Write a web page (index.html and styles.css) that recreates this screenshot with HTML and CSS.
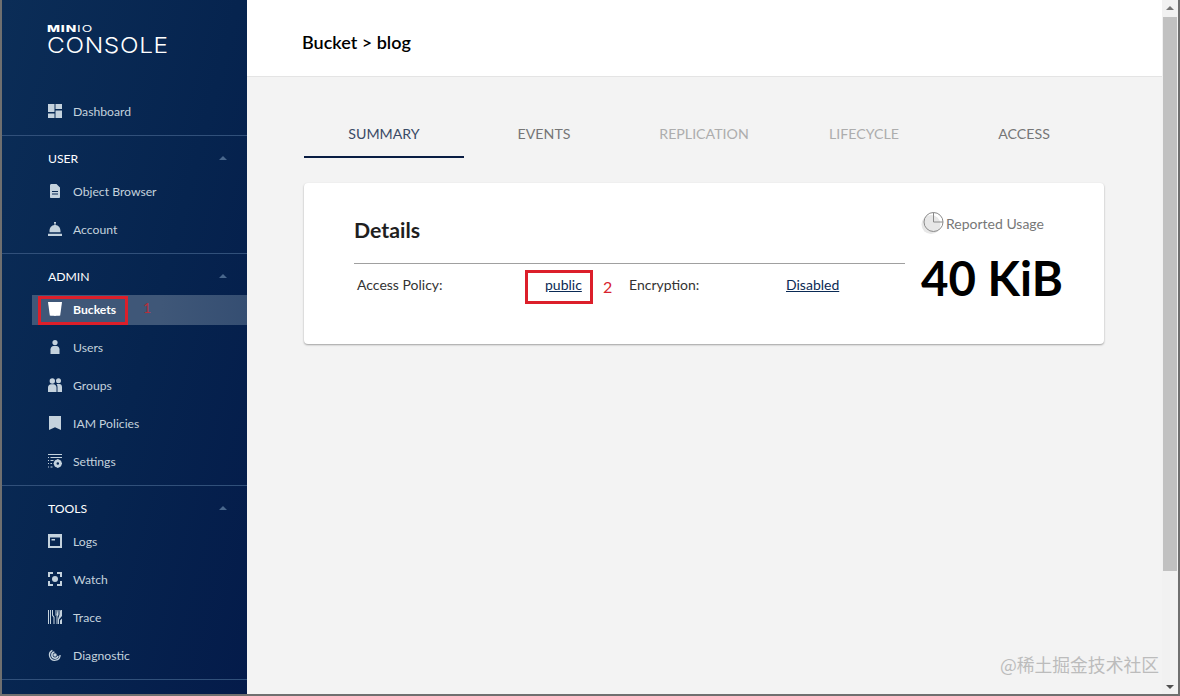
FILE: index.html
```html
<!DOCTYPE html>
<html lang="en">
<head>
<meta charset="utf-8">
<title>MinIO Console</title>
<link rel="stylesheet" href="styles.css">
</head>
<body>
<div class="window">
  <aside class="sidebar">
    <div class="logo">
      <div class="logo-top"><b>MIN</b>IO</div>
      <div class="logo-main">CONSOLE</div>
    </div>
    <section class="group group-first">
      <a class="item">
        <svg class="ico" viewBox="0 0 14 14"><path d="M0 0h6.500v8H0zM7.500 0H14v5H7.500zM0 9.500h6.500V14H0zM7.500 6.500H14V14H7.500z"/></svg>
        <span>Dashboard</span>
      </a>
    </section>
    <section class="group">
      <div class="group-head"><span>USER</span><i class="caret"></i></div>
      <a class="item">
        <svg class="ico" viewBox="0 0 14 14"><path fill-rule="evenodd" d="M2 1.500C2 .7 2.600 0 3.400 0H8.500L12 3.500V13c0 .6-.5 1-1 1H3c-.6 0-1-.4-1-1zM4 7v1h6V7zM4 9.500v1h6v-1z"/></svg>
        <span>Object Browser</span>
      </a>
      <a class="item">
        <svg class="ico" viewBox="0 0 14 14"><path d="M6 0h2v1.500H7.500V3c2.900.2 5 2.700 5 6.200v1H1.500v-1C1.500 5.700 3.600 3.200 6.500 3V1.500H6zM0 11.800h14V14H0z"/></svg>
        <span>Account</span>
      </a>
    </section>
    <section class="group">
      <div class="group-head"><span>ADMIN</span><i class="caret"></i></div>
      <a class="item item-active">
        <svg class="ico" viewBox="0 0 14 14"><path d="M0 0h14l-1.800 13.500c-2.500.5-7.900.5-10.400 0z"/></svg>
        <span>Buckets</span>
      </a>
      <a class="item">
        <svg class="ico" viewBox="0 0 14 14"><circle cx="7" cy="2.600" r="2.600"/><path d="M2.500 14V9.300c0-2 1.500-3.300 3-3.300h3c1.500 0 3 1.300 3 3.300V14z"/></svg>
        <span>Users</span>
      </a>
      <a class="item">
        <svg class="ico" viewBox="0 0 14 14"><circle cx="4.300" cy="3" r="2.700"/><circle cx="10.500" cy="2.800" r="2.500"/><path d="M0 14V9.500c0-2 1.400-3.300 3-3.300h2.500c1.600 0 3 1.300 3 3.300V14zM9.500 14V9c0-1.200-.4-2.200-1-3h3c1.400 0 2.500 1.300 2.500 3v5z"/></svg>
        <span>Groups</span>
      </a>
      <a class="item">
        <svg class="ico" viewBox="0 0 14 14"><path d="M1 0h12v14l-6-2.800L1 14z"/></svg>
        <span>IAM Policies</span>
      </a>
      <a class="item">
        <svg class="ico" viewBox="0 0 14 14"><path d="M0 0h14v1H0zM0 3h1v1H0zM2.500 3h11.500v1H2.500zM0 6h1v1H0zM2.500 6h3v1h-3zM0 9h1v1H0zM2.500 9h1.500v1H2.500zM0 12.500h1v1H0zM2.500 12.500h2v1h-2z"/><circle cx="9.800" cy="9.500" r="2.600" fill="none" stroke-width="2.600" stroke="currentColor"/><path d="M9 5.200h1.600v1.600H9zM9 12.200h1.600v1.600H9zM5.600 8.700h1.600v1.600H5.600zM12.400 8.700H14v1.600h-1.600z"/></svg>
        <span>Settings</span>
      </a>
    </section>
    <section class="group">
      <div class="group-head"><span>TOOLS</span><i class="caret"></i></div>
      <a class="item">
        <svg class="ico" viewBox="0 0 14 14"><path fill-rule="evenodd" d="M0 0h14v14H0zM2 3.500V12h10V3.500zM3.500 5h3.500v1.500H3.500z"/></svg>
        <span>Logs</span>
      </a>
      <a class="item">
        <svg class="ico" viewBox="0 0 14 14"><circle cx="7" cy="7" r="3"/><path d="M0 0h5v2H2v3H0zM9 0h5v5h-2V2H9zM0 9h2v3h3v2H0zM12 9h2v5H9v-2h3z"/></svg>
        <span>Watch</span>
      </a>
      <a class="item">
        <svg class="ico" viewBox="0 0 14 14"><path d="M0 0h1v14H0zM2 0h1v14H2zM4 0l1 .1v5l1.500 2V14h-1V7.500L4 5.500zM7.500 0h1v5l-1 1zM9.500 0h1v5l-1 1.500V14h-1V6zM11.500 0h1v3.500l-1 1zM13 0h1v6l-3 3.500V14h-1V9zM12 10.500l2-2V14h-2z"/></svg>
        <span>Trace</span>
      </a>
      <a class="item">
        <svg class="ico" viewBox="-1 -1 16 16"><path fill="none" stroke="currentColor" stroke-width="1.500" d="M4 1.700A6 6 0 1 0 12.800 7"/><path fill="none" stroke="currentColor" stroke-width="1.800" d="M6.300 3.600A3.600 3.600 0 1 0 10.500 8"/><circle cx="7" cy="7" r="2"/></svg>
        <span>Diagnostic</span>
      </a>
    </section>
  </aside>

  <div class="main">
    <header class="topbar"><h1>Bucket &gt; blog</h1></header>
    <div class="content">
      <nav class="tabs">
        <a class="tab tab-active">SUMMARY</a>
        <a class="tab">EVENTS</a>
        <a class="tab tab-off">REPLICATION</a>
        <a class="tab tab-off">LIFECYCLE</a>
        <a class="tab">ACCESS</a>
      </nav>
      <div class="card">
        <div class="details">
          <h2>Details</h2>
          <div class="rows">
            <span class="lbl lbl-policy">Access Policy:</span>
            <a class="val val-policy">public</a>
            <span class="lbl lbl-enc">Encryption:</span>
            <a class="val">Disabled</a>
          </div>
        </div>
        <div class="usage">
          <div class="usage-label">
            <svg class="pie" viewBox="0 0 24 24"><circle class="pie-shade" cx="10" cy="13.500" r="9.500"/><circle class="pie-line" cx="12.500" cy="11" r="9.500"/><path class="pie-line" d="M12.500 1.500V11H22"/></svg>
            <span>Reported Usage</span>
          </div>
          <div class="usage-value">40 KiB</div>
        </div>
      </div>
    </div>
    <div class="watermark">@稀土掘金技术社区</div>
  </div>

  <div class="scrollbar">
    <i class="arrow arrow-up"></i>
    <div class="thumb-track"><div class="thumb"></div></div>
    <i class="arrow arrow-down"></i>
  </div>

  <div class="mark mark-buckets"></div>
  <div class="mark mark-public"></div>
  <div class="num num-1">1</div>
  <div class="num num-2">2</div>
</div>
</body>
</html>
```

FILE: styles.css
```css
* { box-sizing: border-box; }
html, body { margin: 0; padding: 0; height: 100%; overflow: hidden; }
body { font-family: Lato, "Noto Sans CJK SC", sans-serif; }

.window {
  position: relative;
  display: flex;
  width: 1180px;
  height: 696px;
  overflow: hidden;
  background: #f3f3f3;
  border-left: 2px solid #6f6f6f;
  border-right: 2px solid #6f6f6f;
  border-bottom: 2px solid #6f6f6f;
}

/* Sidebar */
.sidebar {
  flex: 0 0 245px;
  height: 100%;
  overflow: hidden;
  background: linear-gradient(105deg, #0b2d57 0%, #06244f 55%, #041b4a 100%);
  color: #c4d2dd;
}
.logo { height: 93px; padding: 24px 0 0 45px; color: #fff; }
.logo-top { font: 400 9.500px/9px Inter, sans-serif; letter-spacing: 0.600px; transform: scaleX(1.45); transform-origin: left top; }
.logo-top b { font-weight: 800; }
.logo-main { font: 300 22px/20px Inter, sans-serif; letter-spacing: 0.600px; margin-top: 2px; transform: scaleX(1.11); transform-origin: left top; }

.group { border-bottom: 1px solid #31507a; padding-bottom: 4px; }
.group-head {
  display: flex;
  align-items: center;
  justify-content: space-between;
  height: 37px;
  padding: 7px 20px 0 46px;
  font-size: 12.200px;
  color: #fff;
}
.caret {
  width: 0; height: 0;
  border-left: 4.500px solid transparent;
  border-right: 4.500px solid transparent;
  border-bottom: 4px solid #49678c;
}
.item {
  display: flex;
  align-items: center;
  gap: 11px;
  height: 38px;
  padding: 0 0 2px 46px;
  font-size: 12.200px;
  color: #c4d2dd;
}
.ico { width: 14px; height: 14px; fill: currentColor; flex: none; }
.item-active {
  height: 30px;
  margin: 4px 0 4px 30px;
  padding-left: 16px;
  background: linear-gradient(90deg, #3f5778 0%, #3f5778 60%, #354e72 100%);
  color: #fff;
  font-weight: 700;
}

/* Main */
.main { position: relative; flex: 1; min-width: 0; height: 100%; display: flex; flex-direction: column; }
.topbar {
  flex: 0 0 77px;
  display: flex;
  align-items: center;
  padding: 8px 0 0 55px;
  background: #fff;
  border-bottom: 1px solid #e4e4e4;
}
.topbar h1 { margin: 0; font-size: 18px; font-weight: 600; color: #000; }
.content { flex: 1; padding: 33px 0 0 57px; }
.tabs { display: flex; width: 800px; }
.tab {
  flex: 0 0 160px;
  height: 48px;
  display: flex;
  align-items: center;
  justify-content: center;
  font-size: 14.200px;
  color: #767676;
  border-bottom: 2px solid transparent;
}
.tab-active { color: #3a4a66; border-bottom-color: #081c42; }
.tab-off { color: #adadad; }

.card {
  display: flex;
  width: 800px;
  height: 161px;
  margin-top: 25px;
  background: #fff;
  border-radius: 4px;
  box-shadow: 0 1px 2px rgba(0,0,0,.35);
  padding: 0 0 0 50px;
}
.details { flex: 0 0 551px; }
.details h2 {
  margin: 0;
  height: 81px;
  padding-top: 33px;
  font-size: 21.300px;
  font-weight: 700;
  line-height: 28px;
  color: #1f1f1f;
  border-bottom: 1px solid #a0a0a0;
}
.rows { display: flex; align-items: center; height: 41px; font-size: 14px; color: #333; }
.lbl-policy { flex: 0 0 172px; padding-left: 3px; }
.val-policy { flex: 0 0 103px; padding-left: 19px; }
.lbl-enc { flex: 0 0 157px; }
.val { color: #0a2a55; text-decoration: underline; }

.usage { flex: 1; padding: 27px 0 0 16px; }
.usage-label { display: flex; align-items: center; gap: 1px; height: 26px; font-size: 14px; color: #777; }
.pie { width: 24px; height: 24px; flex: none; }
.pie-shade { fill: #e7e7e7; }
.pie-line { fill: none; stroke: #8a8a8a; stroke-width: 1; }
.usage-value { margin-top: 12px; font-size: 47.400px; line-height: 60px; font-weight: 700; color: #000; white-space: nowrap; }

.watermark {
  position: absolute;
  right: 3px;
  bottom: 18px;
  font: 400 17.800px/24px "Noto Sans CJK SC", sans-serif;
  color: #bcbcbc;
}

/* Scrollbar */
.scrollbar {
  flex: 0 0 16px;
  display: flex;
  flex-direction: column;
  align-items: center;
  background: #f1f1f1;
  height: 100%;
}
.thumb-track { flex: 1; width: 100%; padding: 0 1px; }
.thumb { width: 100%; height: 554px; background: #c1c1c1; }
.arrow { width: 0; height: 0; flex: none; border-left: 4px solid transparent; border-right: 4px solid transparent; }
.arrow-up { margin: 6px 0 7px; border-bottom: 4px solid #757575; }
.arrow-down { margin: 6px 0 5px; border-top: 4px solid #505050; }

/* Annotations drawn over the screenshot */
.mark { position: absolute; border: 3px solid #dc1f2a; }
.mark-buckets { left: 36px; top: 296px; width: 90px; height: 29px; }
.mark-public { left: 523px; top: 270px; width: 68px; height: 34px; }
.num { position: absolute; color: #d8232f; font-size: 16px; line-height: 20px; }
.num-1 { left: 141px; top: 298px; font-size: 14px; color: #b4303c; }
.num-2 { left: 601px; top: 277px; }
```
